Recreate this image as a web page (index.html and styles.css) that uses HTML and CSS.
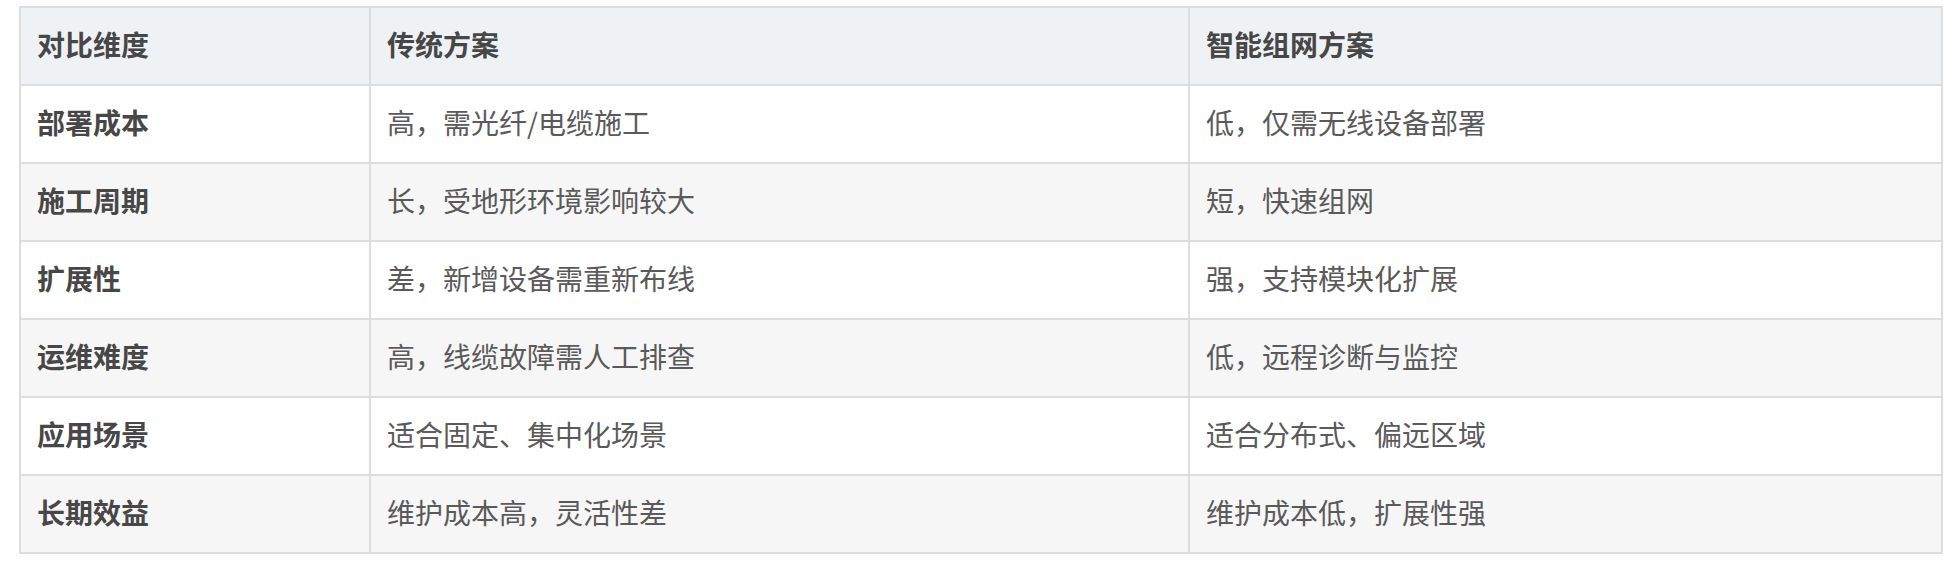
FILE: index.html
```html
<!DOCTYPE html>
<html lang="zh-CN">
<head>
<meta charset="utf-8">
<title>对比</title>
<link rel="stylesheet" href="styles.css">
</head>
<body>
<div class="wrap">
<table class="cmp">
  <colgroup>
    <col class="c1"><col class="c2"><col class="c3">
  </colgroup>
  <thead>
    <tr><th>对比维度</th><th>传统方案</th><th>智能组网方案</th></tr>
  </thead>
  <tbody>
    <tr><td class="dim">部署成本</td><td>高，需光纤/电缆施工</td><td>低，仅需无线设备部署</td></tr>
    <tr><td class="dim">施工周期</td><td>长，受地形环境影响较大</td><td>短，快速组网</td></tr>
    <tr><td class="dim">扩展性</td><td>差，新增设备需重新布线</td><td>强，支持模块化扩展</td></tr>
    <tr><td class="dim">运维难度</td><td>高，线缆故障需人工排查</td><td>低，远程诊断与监控</td></tr>
    <tr><td class="dim">应用场景</td><td>适合固定、集中化场景</td><td>适合分布式、偏远区域</td></tr>
    <tr><td class="dim">长期效益</td><td>维护成本高，灵活性差</td><td>维护成本低，扩展性强</td></tr>
  </tbody>
</table>
</div>
</body>
</html>
```

FILE: styles.css
```css
html, body {
  margin: 0;
  padding: 0;
  background: #ffffff;
}
.wrap {
  padding: 6px 13px 0 19px;
}
.cmp {
  width: 1924px;
  border-collapse: collapse;
  table-layout: fixed;
  font-family: "Noto Sans CJK SC", "Noto Sans", sans-serif;
  font-size: 28px;
  color: #5a5a5a;
}
.c1 { width: 350px; }
.c2 { width: 819px; }
.c3 { width: auto; }
.cmp th, .cmp td {
  border: 2px solid #dddddd;
  height: 78px;
  padding: 0 16px 4px;
  box-sizing: border-box;
  text-align: left;
  vertical-align: middle;
  line-height: 40px;
  white-space: nowrap;
}
.cmp th {
  background: #eff2f5;
  font-weight: 700;
  color: #474747;
}
.cmp td.dim {
  font-weight: 700;
  color: #474747;
}
.cmp tbody tr:nth-child(even) {
  background: #f6f6f6;
}
.cmp tbody tr:nth-child(odd) {
  background: #ffffff;
}
```
